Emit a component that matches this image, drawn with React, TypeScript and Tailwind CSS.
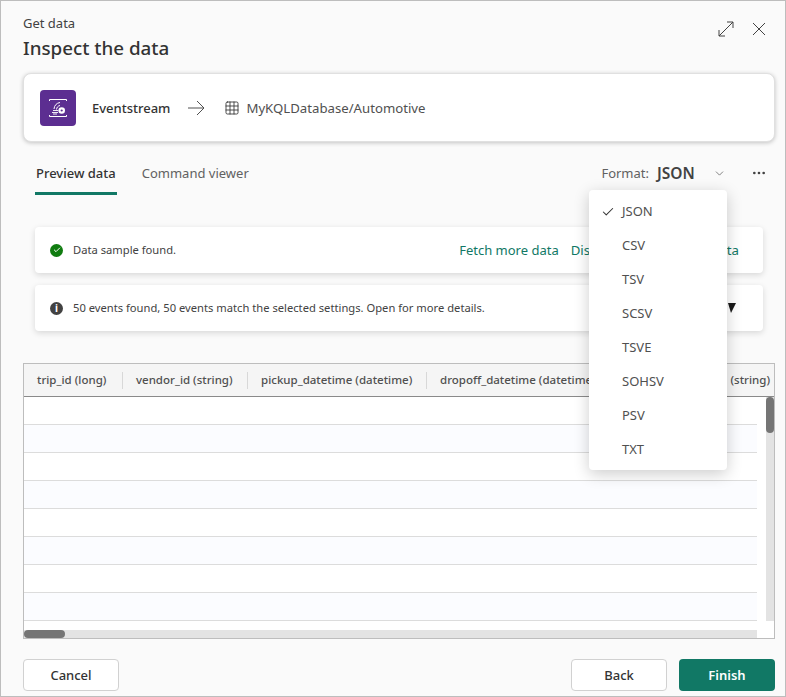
import { Check, ChevronDown, Grid3x3, MoreHorizontal } from 'lucide-react';

const formats = ['JSON', 'CSV', 'TSV', 'SCSV', 'TSVE', 'SOHSV', 'PSV', 'TXT'];

const columns = [
  { label: 'trip_id (long)', width: 'w-[99px]' },
  { label: 'vendor_id (string)', width: 'w-[125px]' },
  { label: 'pickup_datetime (datetime)', width: 'w-[179px]' },
  { label: 'dropoff_datetime (datetime)', width: 'w-[190px]' },
];

function EventstreamIcon() {
  return (
    <div className="flex h-9 w-9 items-center justify-center rounded-[4px] bg-[#5c2e91]">
      <svg width="36" height="36" viewBox="0 0 36 36" fill="none" stroke="#fff" strokeWidth="1">
        <path d="M9.5 11V9.5H26.5V11M9.5 25V26.5H26.5V25" />
        <path d="M13 20.5h5M12 22.5h6M13 24h4" strokeWidth="0.9" />
        <path d="M14 19c.3-3.5 2.5-6 6-6.5M16.5 19.5c.2-2 1.400-3.600 3.500-4" />
        <circle cx="21.700" cy="20.500" r="3.300" fill="#fff" stroke="none" />
        <circle cx="21.700" cy="20.500" r="1.100" fill="#5c2e91" stroke="none" />
      </svg>
    </div>
  );
}

export default function App() {
  return (
    <div className="relative flex h-[697px] w-[786px] flex-col overflow-hidden border border-[#bdbdbd] bg-[#fafafa] font-['Noto_Sans',sans-serif] text-[#424242]">
      {/* header */}
      <div className="flex items-start justify-between pl-[22px] pr-[19px] pt-[12px]">
        <div>
          <div className="text-[13px] leading-[20px] text-[#424242]">Get data</div>
          <div className="mt-[1px] text-[18.800px] font-medium leading-[28px] text-[#333]">Inspect the data</div>
        </div>
        <div className="flex items-center gap-[18px] pt-[8px]">
          <svg width="16" height="16" viewBox="0 0 16 16" fill="none" stroke="#424242" strokeWidth="1">
            <path d="M1 15 15 1M9 1h6v6M1 9v6h6" />
          </svg>
          <svg width="14" height="14" viewBox="0 0 14 14" fill="none" stroke="#424242" strokeWidth="1">
            <path d="M1 1l12 12M13 1 1 13" />
          </svg>
        </div>
      </div>

      {/* source card */}
      <div className="ml-[22px] mr-[10px] mt-[11px] flex h-[69px] items-center rounded-[8px] border border-[#e0e0e0] bg-white pl-[16px] pt-[1px] shadow-[0_1px_4px_rgba(0,0,0,0.22)]">
        <EventstreamIcon />
        <span className="ml-[16px] pt-px text-[13px] font-medium text-[#333]">Eventstream</span>
        <svg className="ml-[17px]" width="18" height="16" viewBox="0 0 18 16" fill="none" stroke="#505050" strokeWidth="1">
          <path d="M1 8h16M10 1l7 7-7 7" />
        </svg>
        <Grid3x3 size={16} strokeWidth={1.3} className="ml-[19px] text-[#333]" />
        <span className="ml-[6px] pt-px text-[13.200px] text-[#505050]">MyKQLDatabase/Automotive</span>
      </div>

      {/* tabs + format */}
      <div className="mt-[19px] flex h-[34px] items-start pl-[34px] pr-[18px]">
        <div className="flex flex-col border-b-[3px] border-[#117865] pb-[7px]">
          <span className="px-px text-[13px] font-medium leading-[24px] text-[#333]">Preview data</span>
        </div>
        <span className="ml-[25px] text-[13px] leading-[24px] text-[#616161]">Command viewer</span>
        <div className="ml-auto flex items-center">
          <span className="text-[13px] leading-[24px] text-[#616161]">Format:</span>
          <span className="ml-[8px] w-[56px] text-[15.500px] font-semibold leading-[24px]">JSON</span>
          <ChevronDown size={13} strokeWidth={1.2} />
          <MoreHorizontal size={16} strokeWidth={2} className="ml-[25px]" />
        </div>
      </div>

      {/* notices */}
      <div className="ml-[34px] mr-[22px] mt-[32px] flex h-[46px] items-center rounded-[4px] bg-white pl-[15px] pr-[24px] shadow-[0_2px_6px_rgba(0,0,0,0.14)]">
        <span className="flex h-[13px] w-[13px] items-center justify-center rounded-full bg-[#107c10]">
          <Check size={8} strokeWidth={3} className="text-white" />
        </span>
        <span className="ml-[10px] pt-px text-[11.200px] text-[#424242]">Data sample found.</span>
        <span className="ml-auto pt-px text-[13px] text-[#117865]">Fetch more data</span>
        <span className="ml-[12px] pt-px text-[13.200px] text-[#117865]">Discard and fetch new data</span>
      </div>
      <div className="ml-[34px] mr-[22px] mt-[12px] flex h-[46px] items-center rounded-[4px] bg-white pl-[15px] pr-[27px] shadow-[0_2px_6px_rgba(0,0,0,0.14)]">
        <span className="flex h-[13px] w-[13px] items-center justify-center rounded-full bg-[#424242] text-[10px] font-bold leading-none text-white">i</span>
        <span className="ml-[10px] pt-px text-[11.200px] text-[#424242]">50 events found, 50 events match the selected settings. Open for more details.</span>
        <svg className="ml-auto" width="8" height="10" viewBox="0 0 8 10">
          <polygon points="0,0 8,0 3,10" fill="#1a1a1a" />
        </svg>
      </div>

      {/* table */}
      <div className="ml-[22px] mr-[10px] mt-[32px] flex h-[276px] flex-col border border-[#bdbdbd] bg-white">
        <div className="flex h-[33px] shrink-0 items-center overflow-hidden border-b border-[#8a8a8a] bg-[#f5f5f5] text-[11.500px] font-medium text-[#505050]">
          {columns.map((col) => (
            <div key={col.label} className={`flex h-[17px] shrink-0 items-center whitespace-nowrap border-r border-[#d8d8d8] pl-[13px] ${col.width}`}>
              {col.label}
            </div>
          ))}
          <div className="ml-auto whitespace-nowrap pr-[4px]">(string)</div>
        </div>
        <div className="flex min-h-0 flex-1">
          <div className="flex min-w-0 flex-1 flex-col">
            {Array.from({ length: 8 }).map((_, i) => (
              <div key={i} className={`h-[28px] shrink-0 border-b border-[#dcdcdc] ${i % 2 === 1 ? 'bg-[#fbfcff]' : 'bg-white'}`} />
            ))}
            <div className="mt-auto h-[8px] bg-[#e3e3e3]">
              <div className="h-full w-[41px] rounded-full bg-[#757575]" />
            </div>
          </div>
          <div className="flex w-[17px] shrink-0 justify-end">
            <div className="h-[224px] w-[8px] bg-[#e3e3e3]">
              <div className="h-[36px] w-full rounded-full bg-[#757575]" />
            </div>
          </div>
        </div>
      </div>

      {/* footer */}
      <div className="ml-[22px] mr-[10px] mt-[20px] flex items-center text-[13px]">
        <button className="h-[32px] w-[96px] rounded-[4px] border border-[#d1d1d1] bg-white pt-px font-medium text-[#333]">Cancel</button>
        <button className="ml-auto h-[32px] w-[96px] rounded-[4px] border border-[#d1d1d1] bg-white pt-px font-medium text-[#333]">Back</button>
        <button className="ml-[12px] h-[32px] w-[96px] rounded-[4px] bg-[#117865] pt-px font-semibold text-white">Finish</button>
      </div>

      {/* format dropdown */}
      <div className="absolute left-[588px] top-[189px] flex w-[138px] flex-col rounded-[4px] bg-white pb-[3px] pt-[5px] shadow-[0_4px_16px_rgba(0,0,0,0.2)]">
        {formats.map((f) => (
          <div key={f} className="flex h-[34px] items-center text-[13px] text-[#505050]">
            <span className="flex w-[33px] justify-end pr-[7px]">
              {f === 'JSON' && <Check size={14} strokeWidth={1.8} className="text-[#333]" />}
            </span>
            {f}
          </div>
        ))}
      </div>
    </div>
  );
}
